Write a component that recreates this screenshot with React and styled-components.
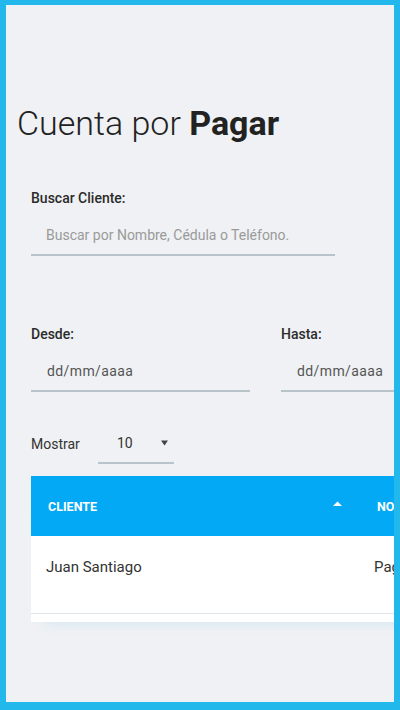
import styled, { createGlobalStyle } from 'styled-components'

const GlobalStyle = createGlobalStyle`
    html, body {
        margin: 0;
        padding: 0;
        background: #22b8ec;
    }
    * {
        box-sizing: border-box;
    }
`

const rows = [
    { cliente: 'Juan Santiago', nota: 'Pagado' },
]

export default function App() {
    return (
        <>
            <GlobalStyle />
            <Frame>
                <Title>Cuenta por <b>Pagar</b></Title>

                <Field>
                    <Label>Buscar Cliente:</Label>
                    <Input $width={304} $pad={15}>
                        <Placeholder>Buscar por Nombre, Cédula o Teléfono.</Placeholder>
                    </Input>
                </Field>

                <DateRow>
                    <Field>
                        <Label>Desde:</Label>
                        <Input $width={219} $pad={16}>
                            <DateText>dd/mm/aaaa</DateText>
                        </Input>
                    </Field>
                    <Field>
                        <Label>Hasta:</Label>
                        <Input $width={219} $pad={16}>
                            <DateText>dd/mm/aaaa</DateText>
                        </Input>
                    </Field>
                </DateRow>

                <ShowRow>
                    <span>Mostrar</span>
                    <Select>
                        <span>10</span>
                        <svg width="7" height="6" viewBox="0 0 7 6">
                            <path d="M0 0.5 L7 0.5 L3.5 5.5 Z" fill="#444" />
                        </svg>
                    </Select>
                </ShowRow>

                <Card>
                    <Table>
                        <thead>
                            <tr>
                                <Th $width={329}>
                                    <HeadCell>
                                        CLIENTE
                                        <svg width="9" height="5" viewBox="0 0 9 5">
                                            <path d="M0 5 L4.5 0.5 L9 5 Z" fill="#fff" />
                                        </svg>
                                    </HeadCell>
                                </Th>
                                <Th $width={200}>NOTA</Th>
                            </tr>
                        </thead>
                        <tbody>
                            {rows.map((r) => (
                                <tr key={r.cliente}>
                                    <Td $pad={15}>{r.cliente}</Td>
                                    <Td $pad={14}>{r.nota}</Td>
                                </tr>
                            ))}
                        </tbody>
                    </Table>
                </Card>
            </Frame>
        </>
    )
}

const Frame = styled.div`
    width: 400px;
    height: 710px;
    overflow: hidden;
    border-style: solid;
    border-color: #22b8ec;
    border-width: 5px 6px 8px 6px;
    background: #eff1f4;
    padding: 98px 0 0 11px;
    font-family: Roboto, "Liberation Sans", sans-serif;
    color: #2a2a2a;
`

const Title = styled.h1`
    margin: 0 0 47px 0;
    font-size: 34px;
    line-height: 40px;
    font-weight: 300;
    color: #222;
    white-space: nowrap;

    b{
        font-weight: 700;
    }
`

const Field = styled.div`
    display: flex;
    flex-direction: column;
    gap: 8px;
    padding-left: 14px;
`

const Label = styled.label`
    font-size: 14px;
    line-height: 17px;
    font-weight: 500;
    color: #2b2b2b;
`

const Input = styled.div`
    width: ${p => p.$width}px;
    height: 41px;
    padding-left: ${p => p.$pad}px;
    border-bottom: 2px solid #b9c4ca;
    display: flex;
    align-items: center;
    font-size: 14px;
    white-space: nowrap;
`

const Placeholder = styled.span`
    color: #9a9a9a;
`

const DateText = styled.span`
    color: #555;
    letter-spacing: 0.4px;
`

const DateRow = styled.div`
    display: flex;
    gap: 17px;
    margin-top: 70px;
    width: 600px;
`

const ShowRow = styled.div`
    display: flex;
    align-items: center;
    margin-top: 32px;
    padding-left: 14px;
    font-size: 14px;
    color: #333;

    > span{
        width: 67px;
    }
`

const Select = styled.div`
    width: 76px;
    height: 40px;
    border-bottom: 2px solid #b9c4ca;
    display: flex;
    align-items: center;
    justify-content: space-between;
    padding: 0 6px 0 19px;
    font-size: 14px;
    color: #333;
`

const Card = styled.div`
    margin: 12px 0 0 14px;
    width: 529px;
    background: #fff;
    padding-bottom: 8px;
    box-shadow: 0 12px 14px -14px rgba(0, 169, 244, 0.18);
`

const Table = styled.table`
    border-collapse: collapse;
    width: 529px;
    table-layout: fixed;
`

const Th = styled.th`
    width: ${p => p.$width}px;
    height: 60px;
    background: #03a9f4;
    color: #fff;
    font-size: 12.5px;
    font-weight: 700;
    text-align: left;
    padding: 0 0 0 17px;
`

const HeadCell = styled.div`
    display: flex;
    align-items: center;
    justify-content: space-between;
    padding-right: 18px;

    svg{
        margin-top: -6px;
    }
`

const Td = styled.td`
    height: 77px;
    vertical-align: top;
    padding: 22px 0 0 ${p => p.$pad}px;
    font-size: 15px;
    line-height: 18px;
    color: #333;
    border-bottom: 1px solid #dfe5e8;
    white-space: nowrap;
`
